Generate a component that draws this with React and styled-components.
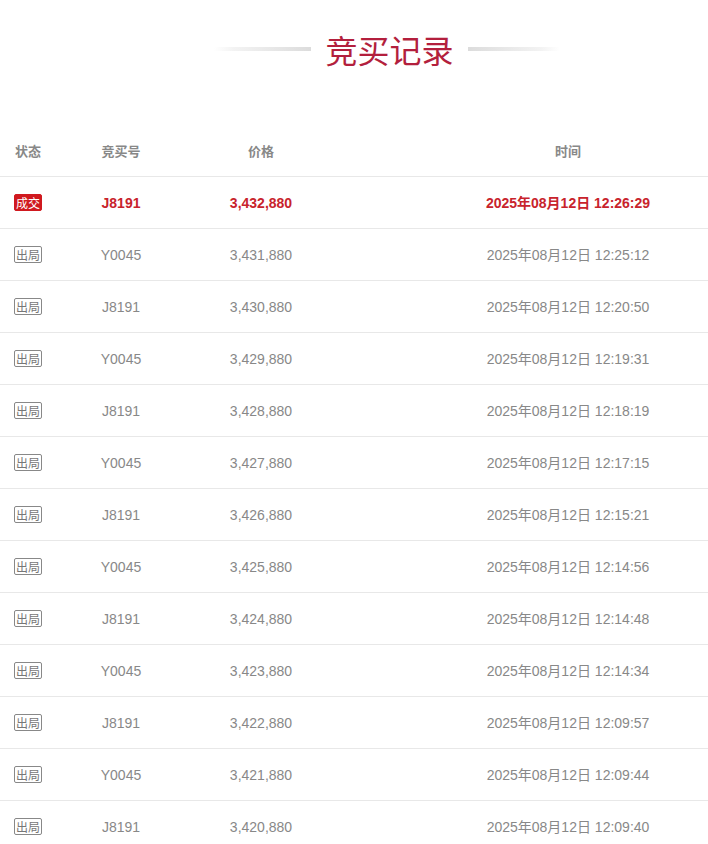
import React from "react";
import styled, { createGlobalStyle } from "styled-components";

const Global = createGlobalStyle`
  html, body { margin: 0; padding: 0; background: #fff; }
  body { font-family: "Liberation Sans", Arial, "Noto Sans CJK SC", sans-serif; }
`;

const Page = styled.div`
  width: 708px;
  background: #fff;
`;

const TitleBar = styled.div`
  display: flex;
  align-items: center;
  justify-content: center;
  padding: 29px 0 0 66px;
  height: 40px;
  margin-bottom: 56px;
`;

const Line = styled.div`
  width: ${(p) => p.$w}px;
  height: 4px;
  background: linear-gradient(
    ${(p) => (p.$dir === "left" ? "to right" : "to left")},
    rgba(220, 220, 220, 0) 0%,
    #f3f3f3 20%,
    #dcdcdc 100%
  );
`;

const Title = styled.h1`
  margin: 0 14px;
  font-size: 32px;
  font-weight: normal;
  line-height: 40px;
  color: #b31f3d;
  font-family: "Noto Sans CJK SC", sans-serif;
`;

const Row = styled.div`
  display: grid;
  grid-template-columns: 56px 130px 150px 1fr;
  align-items: center;
  height: 52px;
  border-bottom: 1px solid #e8e8e8;
  box-sizing: border-box;
  font-size: 14px;
  color: ${(p) => (p.$win ? "#c8232c" : "#888")};
  font-weight: ${(p) => (p.$win || p.$head ? "bold" : "normal")};
`;

const Cell = styled.div`
  text-align: center;
  white-space: nowrap;
`;

const TimeCell = styled(Cell)`
  padding-left: 92px;
  padding-bottom: 1px;
`;

const HeadCell = styled(Cell)`
  color: #888;
  font-family: "Noto Sans CJK SC", sans-serif;
  font-weight: bold;
  font-size: 13px;
`;

const HeadTime = styled(HeadCell)`
  padding-left: 92px;
`;

const StatusCell = styled.div`
  display: flex;
  justify-content: center;
`;

const Badge = styled.span`
  display: inline-flex;
  align-items: center;
  justify-content: center;
  width: 28px;
  height: 17px;
  box-sizing: border-box;
  border-radius: 2px;
  font-size: 12px;
  font-weight: normal;
  font-family: "Noto Sans CJK SC", sans-serif;
  line-height: 1;
  ${(p) =>
    p.$win
      ? `background: #d0191f; color: #fff; border: 1px solid #d0191f;`
      : `background: #fff; color: #777; border: 1px solid #888;`}
`;

const TimeText = styled.span`
  font-family: "Liberation Sans", "Noto Sans CJK SC", sans-serif;
`;

const data = [
  ["J8191", "3,432,880", "12:26:29"],
  ["Y0045", "3,431,880", "12:25:12"],
  ["J8191", "3,430,880", "12:20:50"],
  ["Y0045", "3,429,880", "12:19:31"],
  ["J8191", "3,428,880", "12:18:19"],
  ["Y0045", "3,427,880", "12:17:15"],
  ["J8191", "3,426,880", "12:15:21"],
  ["Y0045", "3,425,880", "12:14:56"],
  ["J8191", "3,424,880", "12:14:48"],
  ["Y0045", "3,423,880", "12:14:34"],
  ["J8191", "3,422,880", "12:09:57"],
  ["Y0045", "3,421,880", "12:09:44"],
  ["J8191", "3,420,880", "12:09:40"],
];

export default function App() {
  return (
    <Page>
      <Global />
      <TitleBar>
        <Line $dir="left" $w={97} />
        <Title>竞买记录</Title>
        <Line $dir="right" $w={92} />
      </TitleBar>
      <Row $head>
        <HeadCell>状态</HeadCell>
        <HeadCell>竞买号</HeadCell>
        <HeadCell>价格</HeadCell>
        <HeadTime>时间</HeadTime>
      </Row>
      {data.map(([no, price, time], i) => {
        const win = i === 0;
        return (
          <Row key={i} $win={win}>
            <StatusCell>
              <Badge $win={win}>{win ? "成交" : "出局"}</Badge>
            </StatusCell>
            <Cell>{no}</Cell>
            <Cell>{price}</Cell>
            <TimeCell>
              <TimeText>2025年08月12日 {time}</TimeText>
            </TimeCell>
          </Row>
        );
      })}
    </Page>
  );
}
